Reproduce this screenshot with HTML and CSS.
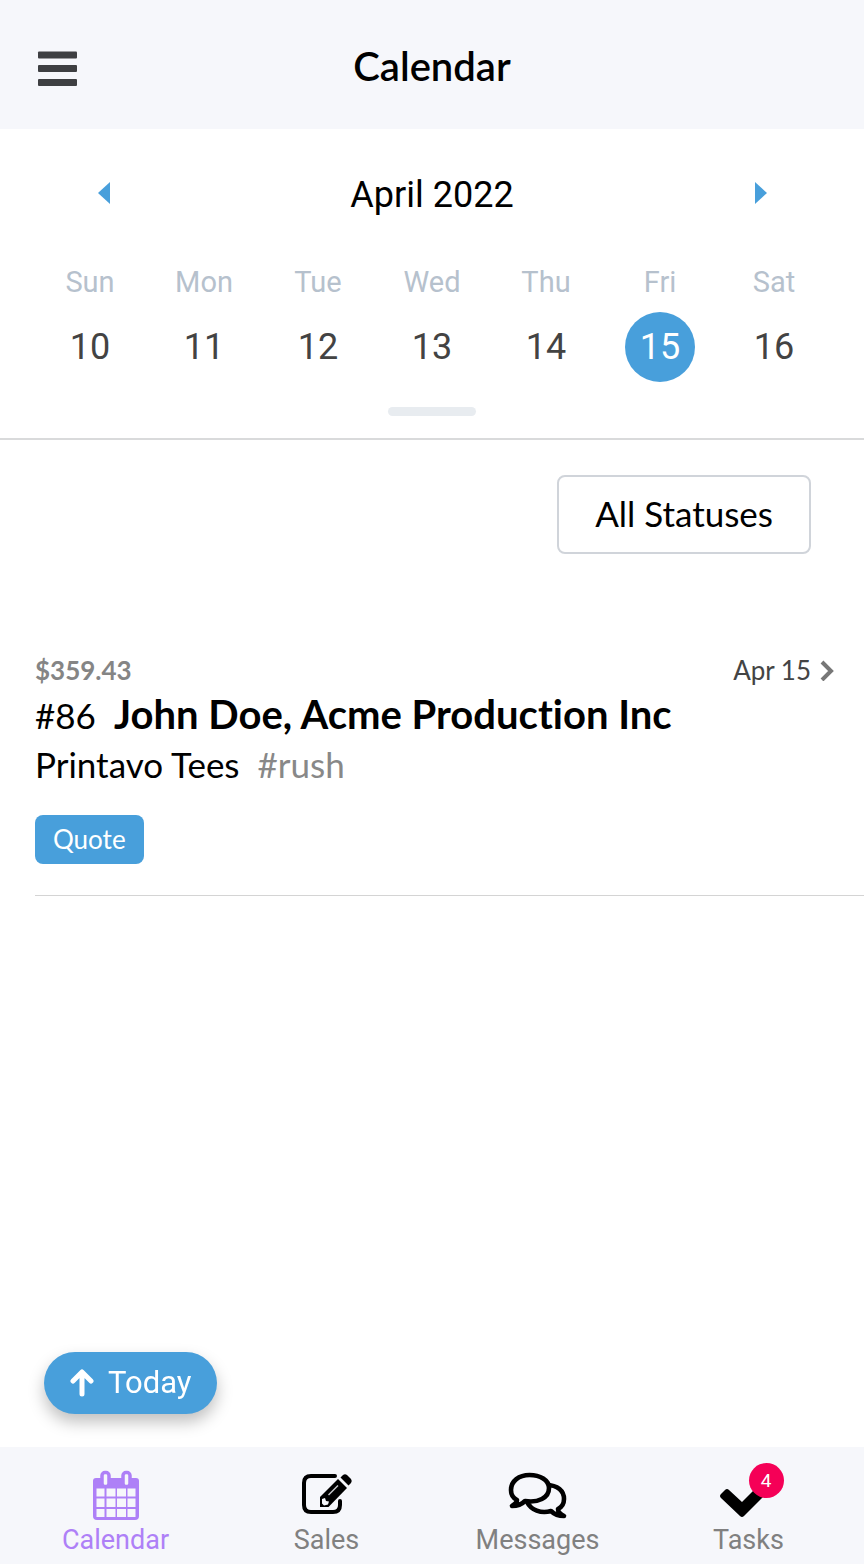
FILE: index.html
```html
<!DOCTYPE html>
<html lang="en">
<head>
    <meta charset="UTF-8">
    <meta name="viewport" content="width=device-width, initial-scale=1.0">
    <title>Calendar</title>
    <link rel="stylesheet" href="styles.css">
</head>
<body>
    <header class="header">
        <button class="menu-button" aria-label="Menu">
            <svg width="40" height="40" viewBox="0 0 40 40" fill="#3e3f42">
                <rect x="1" y="5.500" width="39" height="7" rx="1"/>
                <rect x="1" y="19" width="39" height="7" rx="1"/>
                <rect x="1" y="33" width="39" height="7" rx="1"/>
            </svg>
        </button>
        <h1>Calendar</h1>
    </header>

    <section class="calendar">
        <div class="month">
            <button aria-label="Previous week">
                <svg width="14" height="24" viewBox="0 0 14 24"><path d="M13 0v22L1 11z" fill="#489fdb"/></svg>
            </button>
            <h2>April 2022</h2>
            <button aria-label="Next week">
                <svg width="14" height="24" viewBox="0 0 14 24"><path d="M2 0v22l12-11z" fill="#489fdb"/></svg>
            </button>
        </div>
        <div class="week">
            <button class="day"><span class="name">Sun</span><span class="number">10</span></button>
            <button class="day"><span class="name">Mon</span><span class="number">11</span></button>
            <button class="day"><span class="name">Tue</span><span class="number">12</span></button>
            <button class="day"><span class="name">Wed</span><span class="number">13</span></button>
            <button class="day"><span class="name">Thu</span><span class="number">14</span></button>
            <button class="day selected"><span class="name">Fri</span><span class="number">15</span></button>
            <button class="day"><span class="name">Sat</span><span class="number">16</span></button>
        </div>
        <div class="handle"></div>
    </section>

    <main class="content">
        <div class="filters">
            <button class="status-filter">All Statuses</button>
        </div>
        <a class="order" href="#">
            <div class="order-top">
                <span class="price">$359.43</span>
                <span class="date">Apr 15
                    <svg width="16" height="22" viewBox="0 0 16 22"><path d="M3 3l9 9-9 9" fill="none" stroke="#777" stroke-width="4"/></svg>
                </span>
            </div>
            <div class="order-title">
                <span class="order-id">#86</span>
                <strong>John Doe, Acme Production Inc</strong>
            </div>
            <div class="order-name">
                <span>Printavo Tees</span>
                <span class="tag">#rush</span>
            </div>
            <span class="badge">Quote</span>
        </a>
    </main>

    <button class="today">
        <svg width="24" height="28" viewBox="0 0 24 28"><path d="M12 25V4M3 12l9-9 9 9" fill="none" stroke="#fff" stroke-width="5" stroke-linejoin="round" stroke-linecap="round"/></svg>
        Today
    </button>

    <nav class="tabs">
        <a class="tab active" href="#">
            <svg width="48" height="52" viewBox="0 0 48 52">
                <path d="M4 8h40q3 0 3 3v35q0 4-4 4H5q-4 0-4-4V11q0-3 3-3z" fill="#ae80f7"/>
                <g fill="#f6f7fb" stroke="#ae80f7" stroke-width="3.500">
                    <rect x="10" y="2.500" width="7" height="14" rx="3"/>
                    <rect x="31" y="2.500" width="7" height="14" rx="3"/>
                </g>
                <g fill="#f6f7fb">
                    <path d="M4.500 18.500h8v8h-8zM14.500 18.500h9v8h-9zM25 18.500h9v8h-9zM35.500 18.500h8v8h-8z"/>
                    <path d="M4.500 28.500h8v8.500h-8zM14.500 28.500h9v8.500h-9zM25 28.500h9v8.500h-9zM35.500 28.500h8v8.500h-8z"/>
                    <path d="M4.500 39h8v8h-8zM14.500 39h9v8h-9zM25 39h9v8h-9zM35.500 39h8v8h-8z"/>
                </g>
            </svg>
            <span>Calendar</span>
        </a>
        <a class="tab" href="#">
            <svg width="52" height="52" viewBox="0 0 52 52">
                <path d="M34 6H10q-7 0-7 7v22q0 7 7 7h22q7 0 7-7v-4" fill="none" stroke="#000" stroke-width="4" stroke-linecap="round"/>
                <path d="M19 37v-10L37 9l9 9-18.500 19z"/>
                <path d="M39.500 7.500l2.500-2.500q2-1.500 4 0l4 4q1.500 2 0 4l-2.500 2.500z"/>
                <path d="M21 29l3-1 1 3 3 .5-1 3-4 1-2-2z" fill="#f6f7fb"/>
                <path d="M27.500 25L37 15.500" stroke="#c8c9cc" stroke-width="1.500"/>
            </svg>
            <span>Sales</span>
        </a>
        <a class="tab" href="#">
            <svg width="60" height="52" viewBox="0 0 60 52" fill="#f6f7fb" stroke="#000" stroke-width="4.600" stroke-linejoin="round">
                <path d="M38 15c12 0 18 6 18 14 0 5-2 8-6 10 0 3 2 5 6 7-6 0-10-2-13-5-10 3-20-1-24-9z"/>
                <path d="M21.500 5C11 5 3 11 3 20c0 5 2 8 6 10 0 2-2 4-5 6 6 0 10-2 13-5 13 2 24-3 24-13C41 10 32 5 21.500 5z"/>
            </svg>
            <span>Messages</span>
        </a>
        <a class="tab" href="#">
            <span class="tab-icon">
                <svg width="60" height="52" viewBox="0 0 60 52"><path d="M2 24l4-4q2-2 4 0l13 12 18-18 8 8-24 24q-2 2-4 0L2 28q-2-2 0-4z"/></svg>
                <span class="count">4</span>
            </span>
            <span>Tasks</span>
        </a>
    </nav>
</body>
</html>
```
FILE: styles.css
```css
* {
    margin: 0;
    padding: 0;
    box-sizing: border-box;
}

body {
    font-family: 'Lato', sans-serif;
    font-variant-ligatures: none;
    background-color: white;
    color: #000;
    min-height: 100vh;
    display: flex;
    flex-direction: column;
}

button {
    border: none;
    background: none;
    font-family: inherit;
    color: inherit;
    cursor: pointer;
}

a {
    color: inherit;
    text-decoration: none;
}

svg {
    display: block;
}

.header {
    display: grid;
    grid-template-columns: 1fr auto 1fr;
    align-items: center;
    padding: 37px 37px 34px;
    background-color: #f6f7fb;
}

.menu-button {
    justify-self: start;
}

.header h1 {
    font-size: 40px;
    font-weight: 600;
    line-height: 58px;
}

.calendar {
    padding: 44px 33px 22px;
    border-bottom: 2px solid #d9dadb;
    font-family: 'Roboto', sans-serif;
}

.month {
    display: flex;
    justify-content: space-between;
    align-items: center;
    padding: 0 64px;
    margin-bottom: 48px;
}

.month button {
    padding-bottom: 2px;
}

.month h2 {
    font-size: 36px;
    font-weight: 400;
    line-height: 44px;
}

.week {
    display: grid;
    grid-template-columns: repeat(7, 1fr);
}

.day {
    display: flex;
    flex-direction: column;
    align-items: center;
    gap: 13px;
}

.name {
    font-size: 29px;
    line-height: 34px;
    color: #b6c1cd;
}

.number {
    width: 70px;
    height: 70px;
    border-radius: 50%;
    font-size: 36px;
    line-height: 70px;
    color: #434343;
}

.selected .number {
    background-color: #489fdb;
    color: white;
}

.handle {
    width: 88px;
    height: 9px;
    margin: 25px auto 0;
    border-radius: 5px;
    background-color: #e8ecf0;
}

.content {
    flex: 1;
}

.filters {
    display: flex;
    justify-content: flex-end;
    padding: 35px 53px 98px;
}

.status-filter {
    padding: 0 36px 2px;
    border: 2px solid #d0d4da;
    border-radius: 8px;
    font-size: 35px;
    line-height: 73px;
}

.order {
    display: block;
    margin-left: 35px;
    padding-bottom: 31px;
    border-bottom: 1px solid #d4d4d4;
}

.order-top {
    display: flex;
    justify-content: space-between;
    padding-right: 29px;
    font-size: 26px;
    line-height: 36px;
}

.price {
    font-weight: 700;
    color: #858585;
}

.date {
    display: flex;
    align-items: center;
    gap: 8px;
    color: #444;
}

.order-title {
    display: flex;
    align-items: baseline;
    gap: 18px;
    font-size: 40px;
    line-height: 52px;
}

.order-title strong {
    font-weight: 700;
}

.order-id {
    font-size: 35px;
}

.order-name {
    display: flex;
    gap: 18px;
    font-size: 35px;
    line-height: 46px;
}

.tag {
    color: #888;
}

.badge {
    display: inline-block;
    margin-top: 28px;
    padding: 0 18px;
    border-radius: 8px;
    background-color: #489fdb;
    color: white;
    font-size: 26px;
    line-height: 49px;
}

.today {
    position: fixed;
    left: 44px;
    bottom: 150px;
    display: flex;
    align-items: center;
    gap: 14px;
    padding: 0 26px;
    border-radius: 31px;
    background-color: #489fdb;
    box-shadow: 0 8px 16px rgba(0, 0, 0, 0.25);
    color: white;
    font-family: 'Roboto', sans-serif;
    font-size: 31px;
    line-height: 62px;
}

.tabs {
    display: grid;
    grid-template-columns: repeat(4, 1fr);
    padding: 23px 10px 6px;
    background-color: #f6f7fb;
    font-family: 'Roboto', sans-serif;
    font-size: 27px;
    line-height: 36px;
    color: #808080;
}

.tab {
    display: flex;
    flex-direction: column;
    align-items: center;
}

.tab.active {
    color: #ae80f7;
}

.tab-icon {
    position: relative;
}

.count {
    position: absolute;
    top: -7px;
    right: -5px;
    width: 35px;
    height: 35px;
    border-radius: 50%;
    background-color: #f50057;
    color: white;
    font-size: 19px;
    line-height: 36px;
    text-align: center;
}
```
